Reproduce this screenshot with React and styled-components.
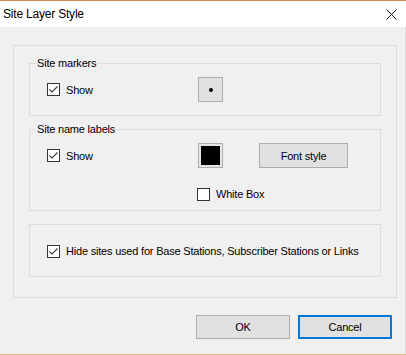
import React from 'react';
import styled, { createGlobalStyle } from 'styled-components';

const GlobalStyle = createGlobalStyle`
  html, body {
    margin: 0;
    padding: 0;
    background: #f0f0f0;
  }
  body {
    font-family: "Liberation Sans", Arial, sans-serif;
    font-size: 11px;
    letter-spacing: -0.2px;
    color: #000;
  }
`;

function CheckBox({ checked, label }) {
  return (
    <StyledCheck>
      <span className="box">
        {checked && (
          <svg width="11" height="11" viewBox="0 0 11 11">
            <path d="M1.5 5.5 L4 8 L9.5 2.5" fill="none" stroke="#3a3a3a" strokeWidth="1.1" />
          </svg>
        )}
      </span>
      <span className="text">{label}</span>
    </StyledCheck>
  );
}

function Group({ title, children, ...rest }) {
  return (
    <StyledGroup {...rest}>
      {title && <span className="legend">{title}</span>}
      {children}
    </StyledGroup>
  );
}

export default function App() {
  return (
    <>
      <GlobalStyle />
      <StyledWindow>
        <TitleBar>
          <span className="title">Site Layer Style</span>
          <svg className="close" width="11" height="11" viewBox="0 0 11 11">
            <path d="M0.5 0.5 L10.5 10.5 M10.5 0.5 L0.5 10.5" stroke="#111" strokeWidth="1" />
          </svg>
        </TitleBar>
        <DialogBody>
          <OuterBox>
            <Group title="Site markers" $pad="13px 0 13px 17px">
              <OptionGrid>
                <CheckBox checked label="Show" />
                <MarkerButton>
                  <span className="dot" />
                </MarkerButton>
              </OptionGrid>
            </Group>
            <Group title="Site name labels" $pad="13px 0 8px 17px">
              <OptionGrid>
                <CheckBox checked label="Show" />
                <ColorSwatch $color="#000" />
                <PushButton $w="89px">Font style</PushButton>
              </OptionGrid>
              <SubRow>
                <CheckBox label="White Box" />
              </SubRow>
            </Group>
            <Group $pad="18px 0 17px 17px">
              <CheckBox checked label="Hide sites used for Base Stations, Subscriber Stations or Links" />
            </Group>
          </OuterBox>
          <Footer>
            <PushButton $w="94px" $h="24px">OK</PushButton>
            <PushButton $w="94px" $h="24px" $focused>Cancel</PushButton>
          </Footer>
        </DialogBody>
      </StyledWindow>
    </>
  );
}

const StyledWindow = styled.div`
  width: 406px;
  height: 355px;
  box-sizing: border-box;
  display: flex;
  flex-direction: column;
  border-top: 1px solid #d98a4b;
  border-bottom: 1px solid #e8b888;
  background: #f0f0f0;
`;

const TitleBar = styled.div`
  height: 26px;
  flex: 0 0 auto;
  display: flex;
  align-items: center;
  justify-content: space-between;
  padding: 0 9px 0 3px;
  background: #fff;

  .title {
    font-size: 12px;
    line-height: 16px;
  }

  .close {
    display: block;
  }
`;

const DialogBody = styled.div`
  flex: 1 1 auto;
  display: flex;
  flex-direction: column;
  padding: 18px 8px 0 13px;
  border-right: 1px solid #dadada;
`;

const OuterBox = styled.div`
  height: 253px;
  box-sizing: border-box;
  border: 1px solid #dcdcdc;
  padding: 17px 15px 0 15px;
  display: flex;
  flex-direction: column;
  gap: 13px;
`;

const StyledGroup = styled.div`
  position: relative;
  border: 1px solid #dcdcdc;
  padding: ${p => p.$pad};

  .legend {
    position: absolute;
    top: -9px;
    left: 6px;
    padding: 0 1px;
    line-height: 16px;
    background: #f0f0f0;
  }
`;

const OptionGrid = styled.div`
  display: grid;
  grid-template-columns: 151px 61px 89px;
  align-items: center;
  height: 25px;
`;

const SubRow = styled.div`
  display: flex;
  margin: 18px 0 0 150px;
  height: 16px;
  align-items: center;
`;

const StyledCheck = styled.label`
  display: flex;
  align-items: center;
  height: 16px;
  gap: 6px;

  .box {
    width: 13px;
    height: 13px;
    box-sizing: border-box;
    border: 1px solid #333;
    background: #fff;
    display: flex;
    align-items: center;
    justify-content: center;
  }

  .box svg {
    display: block;
  }

  .text {
    line-height: 16px;
    white-space: nowrap;
  }
`;

const MarkerButton = styled.div`
  width: 25px;
  height: 25px;
  box-sizing: border-box;
  border: 1px solid #adadad;
  background: #e1e1e1;
  display: flex;
  align-items: center;
  justify-content: center;

  .dot {
    width: 4px;
    height: 4px;
    border-radius: 50%;
    background: #000;
  }
`;

const ColorSwatch = styled.div`
  width: 25px;
  height: 25px;
  box-sizing: border-box;
  border: 1px solid #adadad;
  padding: 2px;
  background: #e6e6e6;

  &::after {
    content: '';
    display: block;
    width: 100%;
    height: 100%;
    background: ${p => p.$color};
  }
`;

const PushButton = styled.div`
  width: ${p => p.$w};
  height: ${p => p.$h || '25px'};
  box-sizing: border-box;
  display: flex;
  align-items: center;
  justify-content: center;
  background: #e1e1e1;
  border: 1px solid ${p => (p.$focused ? '#0078d7' : '#adadad')};
  box-shadow: ${p => (p.$focused ? 'inset 0 0 0 1px #0078d7' : 'none')};
`;

const Footer = styled.div`
  display: flex;
  justify-content: flex-end;
  gap: 8px;
  margin-top: 17px;
  padding-right: 5px;
`;
